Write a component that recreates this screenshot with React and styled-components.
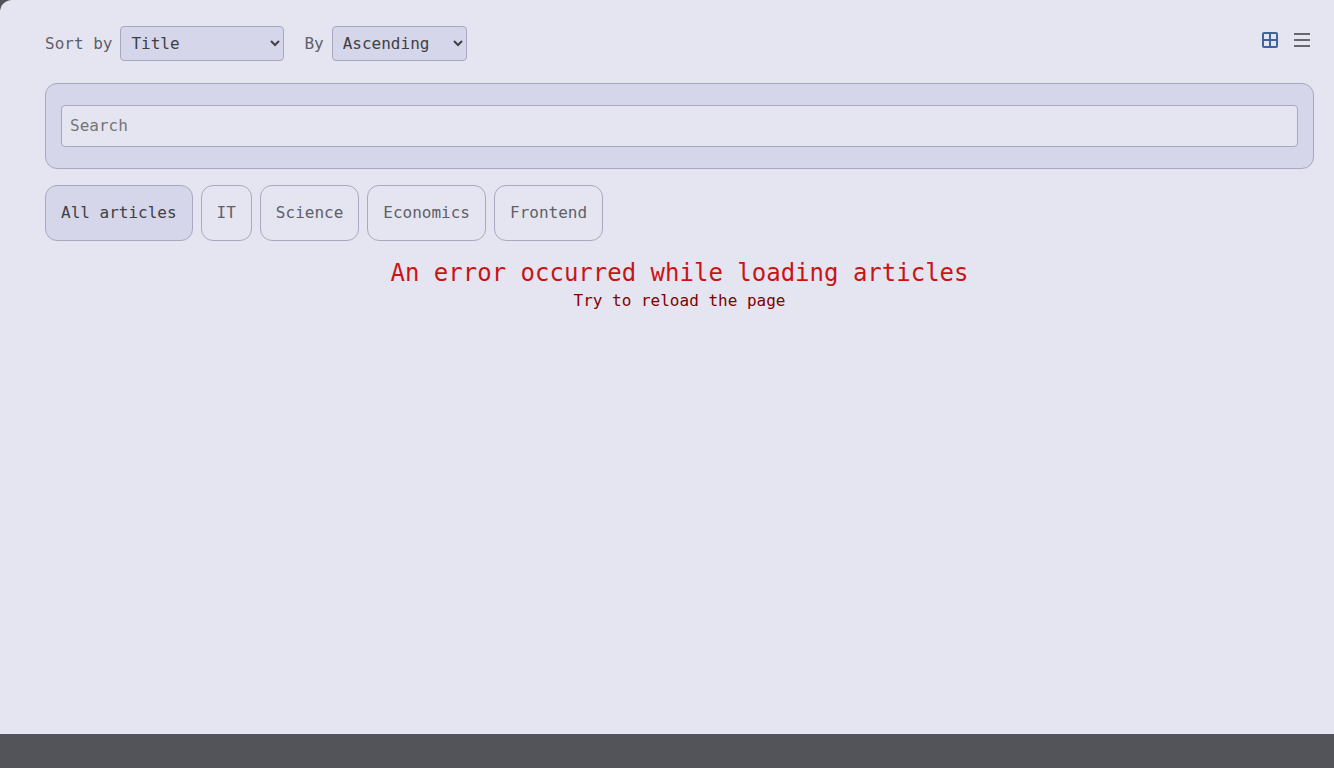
import React, { useState } from "react";
import styled, { createGlobalStyle } from "styled-components";

const GlobalStyle = createGlobalStyle`
  *, *::before, *::after { box-sizing: border-box; }
  body {
    margin: 0;
    background: #535459;
    color: #5f5f69;
    font: 16px/19px "DejaVu Sans Mono", monospace;
  }
  button, input, select { font: inherit; color: inherit; }
`;

const Page = styled.main`
  min-height: calc(100vh - 34px);
  padding: 26px 20px 20px 45px;
  background: #e5e5f1;
  border-top-left-radius: 12px;
`;

const Toolbar = styled.div`
  display: flex;
  justify-content: space-between;
  align-items: flex-start;
  margin-bottom: 22px;
`;

const SortControls = styled.div`
  display: flex;
  gap: 20px;
`;

const SelectLabel = styled.label`
  display: flex;
  align-items: center;
  gap: 8px;
`;

const Select = styled.select`
  width: ${({ $wide }) => ($wide ? "164px" : "135px")};
  height: 35px;
  padding: 0 0 0 6px;
  border: 1px solid #a8a8c0;
  border-radius: 4px;
  background: #d5d6ea;
  color: #404044;
`;

const ViewSwitch = styled.div`
  display: flex;
  gap: 8px;
  padding-top: 2px;
`;

const IconButton = styled.button`
  display: flex;
  padding: 4px;
  border: 0;
  background: none;
  color: ${({ $active }) => ($active ? "#3f659d" : "#66666d")};
  cursor: pointer;
`;

const SearchCard = styled.section`
  padding: 21px 15px;
  border: 1px solid #a8a8c0;
  border-radius: 12px;
  background: #d5d6ea;
`;

const SearchInput = styled.input`
  display: block;
  width: 100%;
  height: 42px;
  padding: 0 8px 2px;
  border: 1px solid #a8a8c0;
  border-radius: 4px;
  background: #e5e5f1;
  color: #404044;
  &::placeholder { color: #757575; }
`;

const Tabs = styled.div`
  display: flex;
  flex-wrap: wrap;
  gap: 8px;
  margin: 16px 0;
`;

const Tab = styled.button`
  height: 56px;
  padding: 0 15px 2px;
  border: 1px solid #a8a8c0;
  border-radius: 12px;
  background: ${({ $active }) => ($active ? "#d5d6ea" : "transparent")};
  color: ${({ $active }) => ($active ? "#404044" : "#5f5f69")};
  cursor: pointer;
`;

const ErrorMessage = styled.div`
  text-align: center;
  color: #800000;
`;

const ErrorTitle = styled.h1`
  margin: 0 0 2px;
  color: #ca1414;
  font-size: 24px;
  font-weight: 400;
  line-height: 32px;
`;

const ErrorText = styled.p`
  margin: 0;
`;

const GridIcon = () => (
  <svg width="16" height="16" viewBox="0 0 16 16" fill="none" stroke="currentColor" strokeWidth="2" aria-hidden="true">
    <rect x="1" y="1" width="14" height="14" rx="1" />
    <path d="M8 1v14M1 8h14" />
  </svg>
);

const ListIcon = () => (
  <svg width="16" height="16" viewBox="0 0 16 16" fill="none" stroke="currentColor" strokeWidth="2" aria-hidden="true">
    <path d="M0 2h16M0 8h16M0 14h16" />
  </svg>
);

const TOPICS = ["All articles", "IT", "Science", "Economics", "Frontend"];

export default function App() {
  const [view, setView] = useState("grid");
  const [topic, setTopic] = useState(TOPICS[0]);

  return (
    <>
      <GlobalStyle />
      <Page>
        <Toolbar>
          <SortControls>
            <SelectLabel>
              Sort by
              <Select $wide defaultValue="title">
                <option value="title">Title</option>
                <option value="views">Views</option>
                <option value="created">Creation date</option>
              </Select>
            </SelectLabel>
            <SelectLabel>
              By
              <Select defaultValue="asc">
                <option value="asc">Ascending</option>
                <option value="desc">Descending</option>
              </Select>
            </SelectLabel>
          </SortControls>
          <ViewSwitch>
            <IconButton type="button" aria-label="Grid view" $active={view === "grid"} onClick={() => setView("grid")}>
              <GridIcon />
            </IconButton>
            <IconButton type="button" aria-label="List view" $active={view === "list"} onClick={() => setView("list")}>
              <ListIcon />
            </IconButton>
          </ViewSwitch>
        </Toolbar>
        <SearchCard>
          <SearchInput type="text" aria-label="Search" placeholder="Search" />
        </SearchCard>
        <Tabs>
          {TOPICS.map((name) => (
            <Tab key={name} type="button" $active={name === topic} onClick={() => setTopic(name)}>
              {name}
            </Tab>
          ))}
        </Tabs>
        <ErrorMessage role="alert">
          <ErrorTitle>An error occurred while loading articles</ErrorTitle>
          <ErrorText>Try to reload the page</ErrorText>
        </ErrorMessage>
      </Page>
    </>
  );
}
